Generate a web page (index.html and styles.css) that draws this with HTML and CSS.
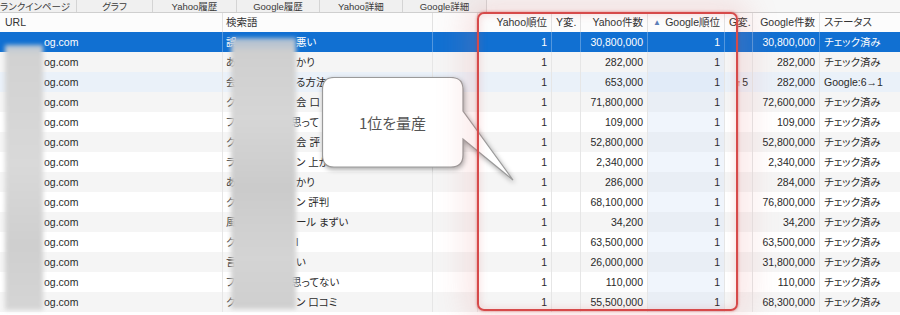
FILE: index.html
```html
<!DOCTYPE html>
<html lang="ja">
<head>
<meta charset="utf-8">
<title>ランク</title>
<link rel="stylesheet" href="styles.css">
</head>
<body>
<div class="app">
  <div class="tabs">
    <div class="tab first">ランクインページ</div>
    <div class="tab">グラフ</div>
    <div class="tab">Yahoo履歴</div>
    <div class="tab">Google履歴</div>
    <div class="tab">Yahoo詳細</div>
    <div class="tab">Google詳細</div>
    <div class="tab-rest"></div>
  </div>
  <div class="grid">
    <div class="row head">
      <div class="cell">URL</div>
      <div class="cell">検索語</div>
      <div class="cell"></div>
      <div class="cell num">Yahoo順位</div>
      <div class="cell">Y変.</div>
      <div class="cell num">Yahoo件数</div>
      <div class="cell num sorthead"><span class="arrow">▲</span><span>Google順位</span></div>
      <div class="cell">G変.</div>
      <div class="cell num">Google件数</div>
      <div class="cell">ステータス</div>
    </div>

    <div class="row sel">
      <div class="cell"><span class="lead-url"></span>og.com</div>
      <div class="cell"><span class="lead">誤</span>悪い</div>
      <div class="cell"></div>
      <div class="cell num">1</div>
      <div class="cell"></div>
      <div class="cell num">30,800,000</div>
      <div class="cell num">1</div>
      <div class="cell"></div>
      <div class="cell num">30,800,000</div>
      <div class="cell">チェック済み</div>
    </div>

    <div class="row even">
      <div class="cell"><span class="lead-url"></span>og.com</div>
      <div class="cell"><span class="lead">あ</span>かり</div>
      <div class="cell"></div>
      <div class="cell num">1</div>
      <div class="cell"></div>
      <div class="cell num">282,000</div>
      <div class="cell num sort">1</div>
      <div class="cell"></div>
      <div class="cell num">282,000</div>
      <div class="cell">チェック済み</div>
    </div>

    <div class="row hover">
      <div class="cell"><span class="lead-url"></span>og.com</div>
      <div class="cell"><span class="lead">会</span>る方法</div>
      <div class="cell"></div>
      <div class="cell num">1</div>
      <div class="cell"></div>
      <div class="cell num">653,000</div>
      <div class="cell num sort">1</div>
      <div class="cell num"><span class="up">↑</span>5</div>
      <div class="cell num">282,000</div>
      <div class="cell">Google:6→1</div>
    </div>

    <div class="row even">
      <div class="cell"><span class="lead-url"></span>og.com</div>
      <div class="cell"><span class="lead">ク</span>会 口</div>
      <div class="cell"></div>
      <div class="cell num">1</div>
      <div class="cell"></div>
      <div class="cell num">71,800,000</div>
      <div class="cell num sort">1</div>
      <div class="cell"></div>
      <div class="cell num">72,600,000</div>
      <div class="cell">チェック済み</div>
    </div>

    <div class="row">
      <div class="cell"><span class="lead-url"></span>og.com</div>
      <div class="cell"><span class="lead short">フ</span>思って</div>
      <div class="cell"></div>
      <div class="cell num">1</div>
      <div class="cell"></div>
      <div class="cell num">109,000</div>
      <div class="cell num sort">1</div>
      <div class="cell"></div>
      <div class="cell num">109,000</div>
      <div class="cell">チェック済み</div>
    </div>

    <div class="row even">
      <div class="cell"><span class="lead-url"></span>og.com</div>
      <div class="cell"><span class="lead">ク</span>会 評</div>
      <div class="cell"></div>
      <div class="cell num">1</div>
      <div class="cell"></div>
      <div class="cell num">52,800,000</div>
      <div class="cell num sort">1</div>
      <div class="cell"></div>
      <div class="cell num">52,800,000</div>
      <div class="cell">チェック済み</div>
    </div>

    <div class="row">
      <div class="cell"><span class="lead-url"></span>og.com</div>
      <div class="cell"><span class="lead">ラ</span>ン 上か</div>
      <div class="cell"></div>
      <div class="cell num">1</div>
      <div class="cell"></div>
      <div class="cell num">2,340,000</div>
      <div class="cell num sort">1</div>
      <div class="cell"></div>
      <div class="cell num">2,340,000</div>
      <div class="cell">チェック済み</div>
    </div>

    <div class="row even">
      <div class="cell"><span class="lead-url"></span>og.com</div>
      <div class="cell"><span class="lead">あ</span>かり</div>
      <div class="cell"></div>
      <div class="cell num">1</div>
      <div class="cell"></div>
      <div class="cell num">286,000</div>
      <div class="cell num sort">1</div>
      <div class="cell"></div>
      <div class="cell num">284,000</div>
      <div class="cell">チェック済み</div>
    </div>

    <div class="row">
      <div class="cell"><span class="lead-url"></span>og.com</div>
      <div class="cell"><span class="lead">ク</span>ン 評判</div>
      <div class="cell"></div>
      <div class="cell num">1</div>
      <div class="cell"></div>
      <div class="cell num">68,100,000</div>
      <div class="cell num sort">1</div>
      <div class="cell"></div>
      <div class="cell num">76,800,000</div>
      <div class="cell">チェック済み</div>
    </div>

    <div class="row even">
      <div class="cell"><span class="lead-url"></span>og.com</div>
      <div class="cell"><span class="lead">風</span>ール まずい</div>
      <div class="cell"></div>
      <div class="cell num">1</div>
      <div class="cell"></div>
      <div class="cell num">34,200</div>
      <div class="cell num sort">1</div>
      <div class="cell"></div>
      <div class="cell num">34,200</div>
      <div class="cell">チェック済み</div>
    </div>

    <div class="row">
      <div class="cell"><span class="lead-url"></span>og.com</div>
      <div class="cell"><span class="lead">ク</span>l</div>
      <div class="cell"></div>
      <div class="cell num">1</div>
      <div class="cell"></div>
      <div class="cell num">63,500,000</div>
      <div class="cell num sort">1</div>
      <div class="cell"></div>
      <div class="cell num">63,500,000</div>
      <div class="cell">チェック済み</div>
    </div>

    <div class="row even">
      <div class="cell"><span class="lead-url"></span>og.com</div>
      <div class="cell"><span class="lead">言</span>い</div>
      <div class="cell"></div>
      <div class="cell num">1</div>
      <div class="cell"></div>
      <div class="cell num">26,000,000</div>
      <div class="cell num sort">1</div>
      <div class="cell"></div>
      <div class="cell num">31,800,000</div>
      <div class="cell">チェック済み</div>
    </div>

    <div class="row">
      <div class="cell"><span class="lead-url"></span>og.com</div>
      <div class="cell"><span class="lead short">フ</span>思ってない</div>
      <div class="cell"></div>
      <div class="cell num">1</div>
      <div class="cell"></div>
      <div class="cell num">110,000</div>
      <div class="cell num sort">1</div>
      <div class="cell"></div>
      <div class="cell num">110,000</div>
      <div class="cell">チェック済み</div>
    </div>

    <div class="row even">
      <div class="cell"><span class="lead-url"></span>og.com</div>
      <div class="cell"><span class="lead">ク</span>ン 口コミ</div>
      <div class="cell"></div>
      <div class="cell num">1</div>
      <div class="cell"></div>
      <div class="cell num">55,500,000</div>
      <div class="cell num sort">1</div>
      <div class="cell"></div>
      <div class="cell num">68,300,000</div>
      <div class="cell">チェック済み</div>
    </div>
  </div>

  <div class="redact redact-url"></div>
  <div class="redact redact-kw"></div>

  <div class="callout">
    <svg class="bubble" width="196" height="110" viewBox="0 0 196 110">
      <path d="M12,0.5 H129 Q141,0.5 141,12.5 V34 L191,103 L141,62 V78 Q141,90 129,90 H12 Q0.5,90 0.5,78 V12.5 Q0.5,0.5 12,0.5 Z" fill="#ffffff" stroke="#9a9a9a" stroke-width="1.2"/>
    </svg>
    <div class="callout-text">1位を量産</div>
  </div>

  <div class="hilite"></div>
</div>
</body>
</html>
```

FILE: styles.css
```css
html, body {
  margin: 0;
  padding: 0;
  background: #ffffff;
}

body {
  font-family: "Liberation Sans", "Noto Sans CJK JP", sans-serif;
  font-size: 10.5px;
  color: #2a2a2a;
  font-feature-settings: "palt";
}

.app {
  position: relative;
  width: 900px;
  height: 315px;
  overflow: hidden;
}

/* tab strip */
.tabs {
  display: flex;
  height: 12px;
  border-bottom: 1px solid #cfcfcf;
  background: #f7f7f7;
}

.tab {
  flex: none;
  width: 83px;
  box-sizing: border-box;
  display: flex;
  justify-content: center;
  align-items: center;
  font-size: 9.5px;
  line-height: 11px;
  color: #3a3a3a;
  background: #f0f0f0;
  border-right: 1px solid #d4d4d4;
  overflow: hidden;
  white-space: nowrap;
}

.tab:nth-child(2) { width: 76px; }
.tab:nth-child(3) { width: 84px; }
.tab:nth-child(6) { width: 84px; }

.tab.first {
  width: 77px;
  justify-content: flex-start;
  padding-left: 0;
}

.tab-rest {
  flex: 1;
}

/* grid */
.grid {
  display: flex;
  flex-direction: column;
}

.row {
  display: grid;
  grid-template-columns: 223px 210px 45px 74px 29px 67px 77px 28px 67px 80px;
  height: 20px;
  background: #ffffff;
}

.row.even { background: #f5f5f5; }
.row.hover { background: #eaf1f9; }

.cell {
  box-sizing: border-box;
  border-right: 1px solid #e6e6e6;
  padding: 0 3px 0 4px;
  line-height: 20px;
  white-space: nowrap;
  overflow: hidden;
}

.cell:first-child { padding-left: 5px; }
.cell:nth-child(2) { padding-left: 3px; }
.cell:last-child { border-right: none; }

.num {
  text-align: right;
  padding-right: 4px;
}

.sort { background-color: rgba(205, 222, 245, 0.3); }

.row.head {
  height: 19px;
  background: #fcfcfc;
  color: #333333;
}

.row.head .cell {
  line-height: 19px;
  border-right-color: #e2e2e2;
}

.sorthead {
  display: flex;
  justify-content: space-between;
  padding-left: 5px;
}

.arrow {
  font-size: 8px;
  color: #5b7fb8;
}

.row.sel {
  background: #1170d2;
  color: #ffffff;
}

.row.sel .cell { border-right-color: rgba(255, 255, 255, 0.28); }

.lead-url {
  display: inline-block;
  width: 39px;
}

.lead {
  display: inline-block;
  width: 70px;
  overflow: hidden;
  vertical-align: top;
}

.lead.short { width: 65px; }

.up {
  color: #d24545;
  font-size: 9px;
  margin-right: 1px;
}

/* redaction blur strips */
.redact {
  position: absolute;
  filter: blur(2px);
}

.redact-url {
  left: 5px;
  top: 45px;
  width: 38px;
  height: 265px;
  background: linear-gradient(180deg, #b9c6d4 0px, #d2d2d2 10px, #d9d9d9 120px, #cfcfcf 200px, #d5d5d5 265px);
}

.redact-kw {
  left: 231px;
  top: 38px;
  width: 65px;
  height: 271px;
  background: linear-gradient(180deg, #a9bdd2 0px, #cfcfcf 14px, #d6d6d6 80px, #cbcbcb 150px, #d4d4d4 220px, #cfcfcf 271px);
}

/* callout */
.callout {
  position: absolute;
  left: 322px;
  top: 77px;
  width: 196px;
  height: 110px;
}

.bubble {
  display: block;
  filter: drop-shadow(1px 2px 2.5px rgba(0, 0, 0, 0.35));
}

.callout-text {
  position: absolute;
  left: 0;
  top: 0;
  width: 141px;
  height: 90px;
  display: flex;
  align-items: center;
  justify-content: center;
  font-family: "Noto Sans CJK JP", sans-serif;
  font-size: 15px;
  color: #555555;
}

/* red highlight frame */
.hilite {
  position: absolute;
  left: 477px;
  top: 12px;
  width: 261px;
  height: 299px;
  box-sizing: border-box;
  border: 2px solid #d64a4a;
  border-radius: 7px;
  box-shadow: 0 0 3px rgba(200, 40, 40, 0.55), 0 0 30px 12px rgba(230, 120, 120, 0.18), inset 0 0 8px rgba(220, 80, 80, 0.22);
}
```
